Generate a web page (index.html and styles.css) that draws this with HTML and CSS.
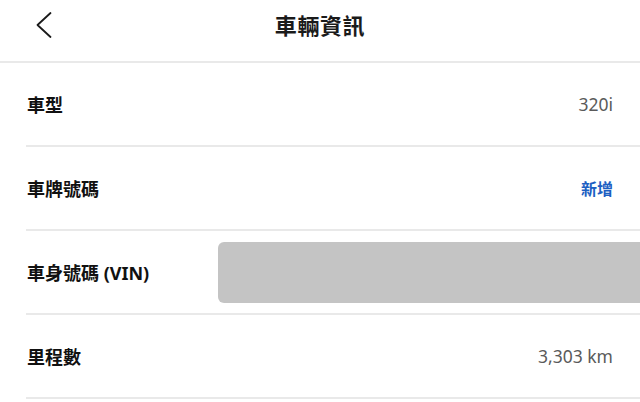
FILE: index.html
```html
<!DOCTYPE html>
<html lang="zh-Hant">
<head>
  <meta charset="UTF-8">
  <meta name="viewport" content="width=device-width, initial-scale=1.0">
  <title>車輛資訊</title>
  <link rel="stylesheet" href="styles.css">
</head>
<body>
  <header class="topbar">
    <a href="#" class="back" aria-label="返回">
      <svg width="18" height="28" viewBox="0 0 18 28">
        <polyline points="15.5,2 2.5,14 15.5,26" fill="none" stroke="#1a1a1a" stroke-width="1.8" stroke-linecap="round" stroke-linejoin="round"/>
      </svg>
    </a>
    <h1 class="title">車輛資訊</h1>
  </header>

  <ul class="info-list">
    <li class="row">
      <span class="label">車型</span>
      <span class="value">320i</span>
    </li>
    <li class="row">
      <span class="label">車牌號碼</span>
      <a href="#" class="add-link">新增</a>
    </li>
    <li class="row">
      <span class="label">車身號碼 (VIN)</span>
      <span class="masked"></span>
    </li>
    <li class="row">
      <span class="label">里程數</span>
      <span class="value">3,303 km</span>
    </li>
  </ul>
</body>
</html>
```

FILE: styles.css
```css
body {
  margin: 0;
  font-family: 'Noto Sans', 'Noto Sans CJK TC', sans-serif;
  background: #fff;
  color: #1a1a1a;
  overflow: hidden;
}

.topbar {
  position: relative;
  height: 61px;
  display: flex;
  align-items: center;
  justify-content: center;
  border-bottom: 2px solid #e9e9e9;
}

.back {
  position: absolute;
  left: 35px;
  top: 11px;
  display: block;
  line-height: 0;
}

.title {
  margin: 0 0 14px;
  font-size: 22px;
  font-weight: bold;
  letter-spacing: 0.6px;
}

.info-list {
  list-style: none;
  margin: 0;
  padding: 0;
}

.row {
  height: 82px;
  margin-left: 26px;
  padding: 0 27px 0 1px;
  display: flex;
  align-items: center;
  justify-content: space-between;
  border-bottom: 2px solid #e9e9e9;
}

.label {
  font-size: 18px;
  font-weight: bold;
  color: #111;
}

.value {
  font-size: 17.5px;
  color: #5a5a5a;
}

.add-link {
  font-size: 16px;
  font-weight: bold;
  color: #1c5fc2;
  text-decoration: none;
}

/* bloque gris que tapa el VIN */
.masked {
  width: 422px;
  height: 61px;
  margin-right: -27px;
  background: #c4c4c4;
  border-radius: 6px 0 0 6px;
}
```
